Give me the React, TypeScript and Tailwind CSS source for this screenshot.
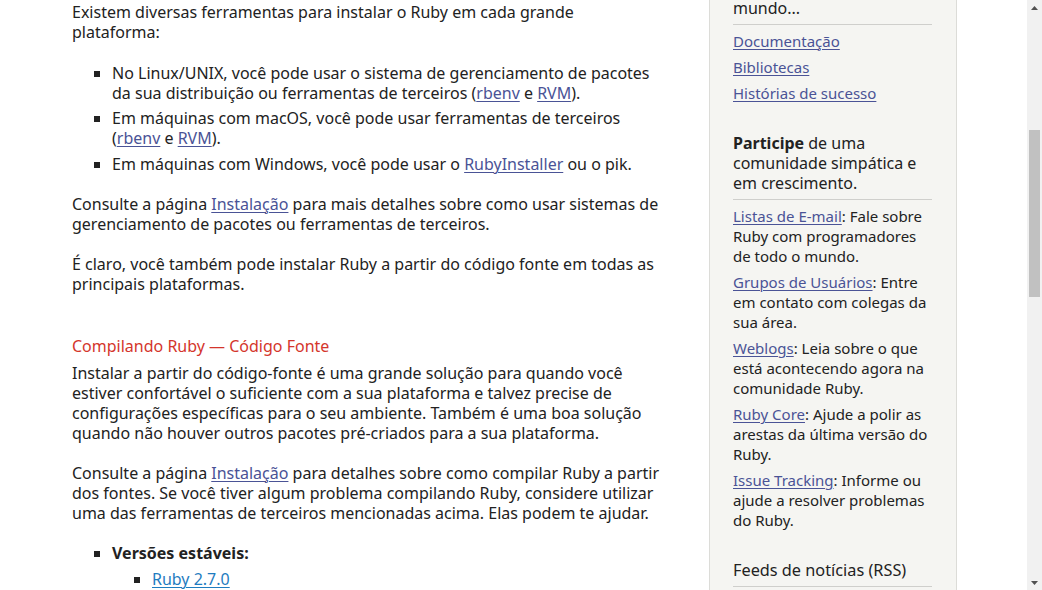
import React from "react";

const L = ({ children, c = "text-[#4a5396]" }: { children: React.ReactNode; c?: string }) => (
  <a href="#" className={`${c} underline underline-offset-[2px] decoration-1`}>{children}</a>
);

export default function App() {
  return (
    <div className="w-[1042px] h-[590px] overflow-hidden flex bg-white text-[#222] font-['Noto_Sans',sans-serif] text-[16px] leading-[20px]">
      <div className="flex-1 flex overflow-hidden">
        <main className="ml-[72px] w-[590px] shrink-0 pt-[2px]">
          <p>Existem diversas ferramentas para instalar o Ruby em cada grande plataforma:</p>
          <ul className="list-[square] pl-[40px] mt-[21px]">
            <li>No Linux/UNIX, você pode usar o sistema de gerenciamento de pacotes da sua distribuição ou ferramentas de terceiros (<L>rbenv</L> e <L>RVM</L>).</li>
            <li className="mt-[5px]">Em máquinas com macOS, você pode usar ferramentas de terceiros (<L>rbenv</L> e <L>RVM</L>).</li>
            <li className="mt-[6px]">Em máquinas com Windows, você pode usar o <L>RubyInstaller</L> ou o pik.</li>
          </ul>
          <p className="mt-[20px]">Consulte a página <L>Instalação</L> para mais detalhes sobre como usar sistemas de gerenciamento de pacotes ou ferramentas de terceiros.</p>
          <p className="mt-[20px]">É claro, você também pode instalar Ruby a partir do código fonte em todas as principais plataformas.</p>
          <h3 className="mt-[42px] text-[#d4352c]">Compilando Ruby — Código Fonte</h3>
          <p className="mt-[7px]">Instalar a partir do código-fonte é uma grande solução para quando você estiver confortável o suficiente com a sua plataforma e talvez precise de configurações específicas para o seu ambiente. Também é uma boa solução quando não houver outros pacotes pré-criados para a sua plataforma.</p>
          <p className="mt-[20px]">Consulte a página <L>Instalação</L> para detalhes sobre como compilar Ruby a partir dos fontes. Se você tiver algum problema compilando Ruby, considere utilizar uma das ferramentas de terceiros mencionadas acima. Elas podem te ajudar.</p>
          <ul className="list-[square] pl-[40px] mt-[20px]">
            <li>
              <strong className="font-bold">Versões estáveis:</strong>
              <ul className="list-[square] pl-[40px] mt-[6px]">
                <li><L c="text-[#1f7cc0]">Ruby 2.7.0</L></li>
              </ul>
            </li>
          </ul>
        </main>
        <aside className="ml-[47px] w-[248px] shrink-0 bg-[#f5f5f2] border-x border-[#dcdcd8] pl-[23px] pr-[24px] -mt-[2px]">
          <p>mundo...</p>
          <div className="h-px bg-[#cfcfcc] mt-[6px]" />
          <div className="mt-[6px] flex flex-col gap-[6px] text-[15px]">
            <div><L>Documentação</L></div>
            <div><L>Bibliotecas</L></div>
            <div><L>Histórias de sucesso</L></div>
          </div>
          <p className="mt-[30px]"><strong className="font-bold">Participe</strong> de uma comunidade simpática e em crescimento.</p>
          <div className="h-px bg-[#cfcfcc] mt-[6px]" />
          <div className="mt-[6px] flex flex-col gap-[6px] text-[15px]">
            <p><L>Listas de E-mail</L>: Fale sobre Ruby com programadores de todo o mundo.</p>
            <p><L>Grupos de Usuários</L>: Entre em contato com colegas da sua área.</p>
            <p><L>Weblogs</L>: Leia sobre o que está acontecendo agora na comunidade Ruby.</p>
            <p><L>Ruby Core</L>: Ajude a polir as arestas da última versão do Ruby.</p>
            <p><L>Issue Tracking</L>: Informe ou ajude a resolver problemas do Ruby.</p>
          </div>
          <h3 className="mt-[28px] text-[16.3px] leading-[24px]">Feeds de notícias (RSS)</h3>
          <div className="h-px bg-[#cfcfcc] mt-[4px]" />
        </aside>
      </div>
      <div className="w-[15px] shrink-0 bg-[#f1f1f1] flex flex-col items-center">
        <div className="h-[15px] w-full flex items-center justify-center">
          <svg width="7" height="4" viewBox="0 0 7 4"><polygon points="0,4 7,4 3.5,0" fill="#505050" /></svg>
        </div>
        <div className="mt-[115px] w-[11px] h-[167px] bg-[#c1c1c1]" />
        <div className="flex-1" />
        <div className="h-[15px] w-full flex items-center justify-center">
          <svg width="7" height="4" viewBox="0 0 7 4"><polygon points="0,0 7,0 3.5,4" fill="#505050" /></svg>
        </div>
      </div>
    </div>
  );
}
